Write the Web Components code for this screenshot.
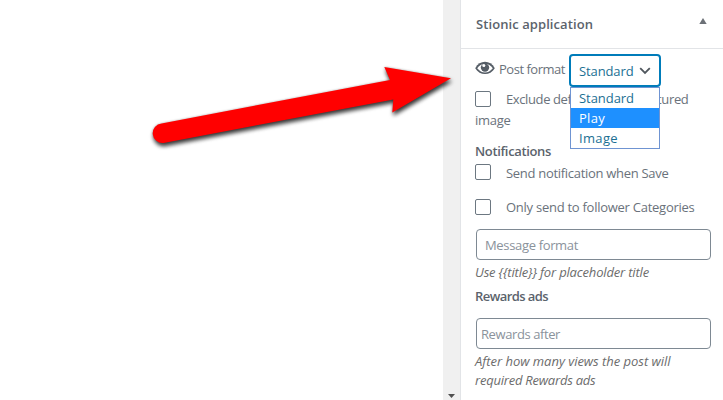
<!DOCTYPE html>
<html lang="en"><head><meta charset="utf-8"><title>Stionic application</title>
<style>
body{margin:0;background:#fff;width:723px;height:400px;overflow:hidden;font:13px/20px "Open Sans","Noto Sans",sans-serif;color:#5b636c}
</style></head><body>
<app-screen></app-screen>
<script>
function define(name, html, ready){
  const t=document.createElement('template');t.innerHTML=html;
  customElements.define(name,class extends HTMLElement{
    connectedCallback(){
      if(!this.shadowRoot){this.attachShadow({mode:'open'}).append(t.content.cloneNode(true));}
      if(ready)ready.call(this,this.shadowRoot);
    }
  });
}
/* Text line whose tracking is adjusted to a given measure */
define('ui-text',`<style>:host{display:block;white-space:nowrap;height:20px;line-height:20px}span{display:inline-block}</style><span><slot></slot></span>`,function(root){
  const s=root.querySelector('span'),w=+this.getAttribute('w'),n=this.textContent.length;
  if(w)s.style.letterSpacing=((w-s.getBoundingClientRect().width)/n).toFixed(3)+'px';
});
define('ui-checkbox',`<style>:host{display:flex;gap:15px;color:#6a727b}i{box-sizing:border-box;width:16px;height:16px;border:1px solid #6c7781;border-radius:2px;background:#fff;flex:none}div{display:flex}</style><i></i><div><slot></slot></div>`);
define('ui-input',`<style>:host{display:flex;align-items:center;box-sizing:border-box;width:235px;height:31px;margin-left:1px;border:1px solid #7e8993;border-radius:4px;color:#8a929b;padding-left:var(--inset,8px);background:#fff}</style><slot></slot>`);
define('ui-select',`<style>
:host{display:block;position:relative;width:92px;height:33px;color:#1b6f93}
.box{display:flex;align-items:center;justify-content:space-between;box-sizing:border-box;height:33px;border:2px solid #007cba;border-radius:4px;padding:1px 8px 0 8px;background:#fff}
.menu{position:absolute;z-index:2;top:33px;left:1px;width:90px;height:62px;box-sizing:border-box;border:1px solid #6f94d2;background:#fff}
.menu div{height:20px;padding-left:8px}.on{background:#1e90ff;color:#fff}
svg{display:block}</style>
<div class="box"><ui-text w="54.5">Standard</ui-text><svg width="12" height="8" viewBox="0 0 12 8"><path d="M1.2 1.2 6 6 10.8 1.2" fill="none" stroke="#50575e" stroke-width="1.8"/></svg></div>
<div class="menu"><div><ui-text w="55">Standard</ui-text></div><div class="on"><ui-text w="26">Play</ui-text></div><div><ui-text w="39">Image</ui-text></div></div>`);
define('pointer-arrow',`<style>:host{position:absolute;z-index:3;left:0;top:0}svg{display:block;overflow:visible;filter:drop-shadow(1px 3px 2px rgba(0,0,0,.75)) drop-shadow(0 0 1px rgba(0,0,0,.25))}</style>
<svg width="460" height="160" viewBox="0 0 460 160"><path d="M161.5 123.4 390 80 384.3 67 451 78.3 392.3 112.5 393.3 99.4 163.5 142.9A9.8 9.8 0 0 1 161.5 123.4Z" fill="#f00"/></svg>`);
define('meta-panel',`<style>
:host{display:flex;flex-direction:column;box-sizing:border-box;width:263px;height:400px;border-left:1px solid #e2e4e7;background:#fff}
header{display:flex;justify-content:space-between;box-sizing:border-box;height:49px;padding:14px 16px 0 15px;border-bottom:1px solid #e2e4e7;font-weight:600}
header svg{margin-top:4px}
.body{padding:5px 0 0 14px}
.format{display:flex;height:37px;color:#6a727b}.format .eye{margin-top:7px;width:20px;flex:none}.format ui-text{margin:5px 0 0 4px}.format ui-select{margin-left:5px}
.format>.name{width:65px}
.strong{font-weight:600}.note{font-style:italic;color:#6c6c6c}
ui-checkbox ui-text{margin-top:-1px}
</style>
<header><ui-text w="117">Stionic application</ui-text><svg width="8" height="7" viewBox="0 0 8 7"><path d="M4 0 7.7 6H.3Z" fill="#6c7177"/></svg></header>
<div class="body">
<div class="format"><svg class="eye" width="20" height="14" viewBox="0 0 20 14"><path d="M.2 7.2C4.8-1.3 15.2-1.3 19.8 7.2 15.2 15 4.8 15 .2 7.2Z" fill="#555d66"/><path d="M2.2 7.3Q5 3 10 3T17.8 7.3Q14.5 11.5 10 11.5T2.2 7.3Z" fill="#fff"/><circle cx="10" cy="6.6" r="4.2" fill="#555d66"/><circle cx="8.8" cy="4.5" r="1.5" fill="#fff"/></svg>
<ui-text class="name" w="66">Post format</ui-text><ui-select></ui-select></div>
<ui-checkbox style="height:19px"><ui-text w="65.5" style="width:151px;margin-top:-2px">Exclude def</ui-text><ui-text w="31.5" style="margin-top:-2px">tured</ui-text></ui-checkbox>
<ui-text w="35.5" style="color:#6a727b">image</ui-text>
<ui-text class="strong" w="76" style="margin-top:11px">Notifications</ui-text>
<ui-checkbox style="height:35px;margin-top:3px"><ui-text w="162.5">Send notification when Save</ui-text></ui-checkbox>
<ui-checkbox style="height:30px"><ui-text w="188.5" style="margin-top:-2px">Only send to follower Categories</ui-text></ui-checkbox>
<ui-input><ui-text w="93">Message format</ui-text></ui-input>
<ui-text class="note" w="174" style="margin-top:2px">Use {{title}} for placeholder title</ui-text>
<ui-text class="strong" w="73" style="margin-top:4px">Rewards ads</ui-text>
<ui-input style="margin-top:12px;--inset:4px"><ui-text w="79">Rewards after</ui-text></ui-input>
<ui-text class="note" w="195.5" style="margin-top:2px">After how many views the post will</ui-text>
<ui-text class="note" w="120.5" style="margin-top:-1px">required Rewards ads</ui-text>
</div>`);
define('scroll-track',`<style>:host{display:flex;align-items:flex-end;justify-content:center;box-sizing:border-box;width:17px;height:400px;background:#f0f0f0;padding-bottom:2px}svg{display:block}</style><svg width="7" height="4" viewBox="0 0 7 4"><path d="M0 0H7L3.5 4Z" fill="#505050"/></svg>`);
define('app-screen',`<style>:host{display:grid;grid-template-columns:443px 17px 263px;height:400px;position:relative}</style><main></main><scroll-track></scroll-track><meta-panel></meta-panel><pointer-arrow></pointer-arrow>`);
</script></body></html>
